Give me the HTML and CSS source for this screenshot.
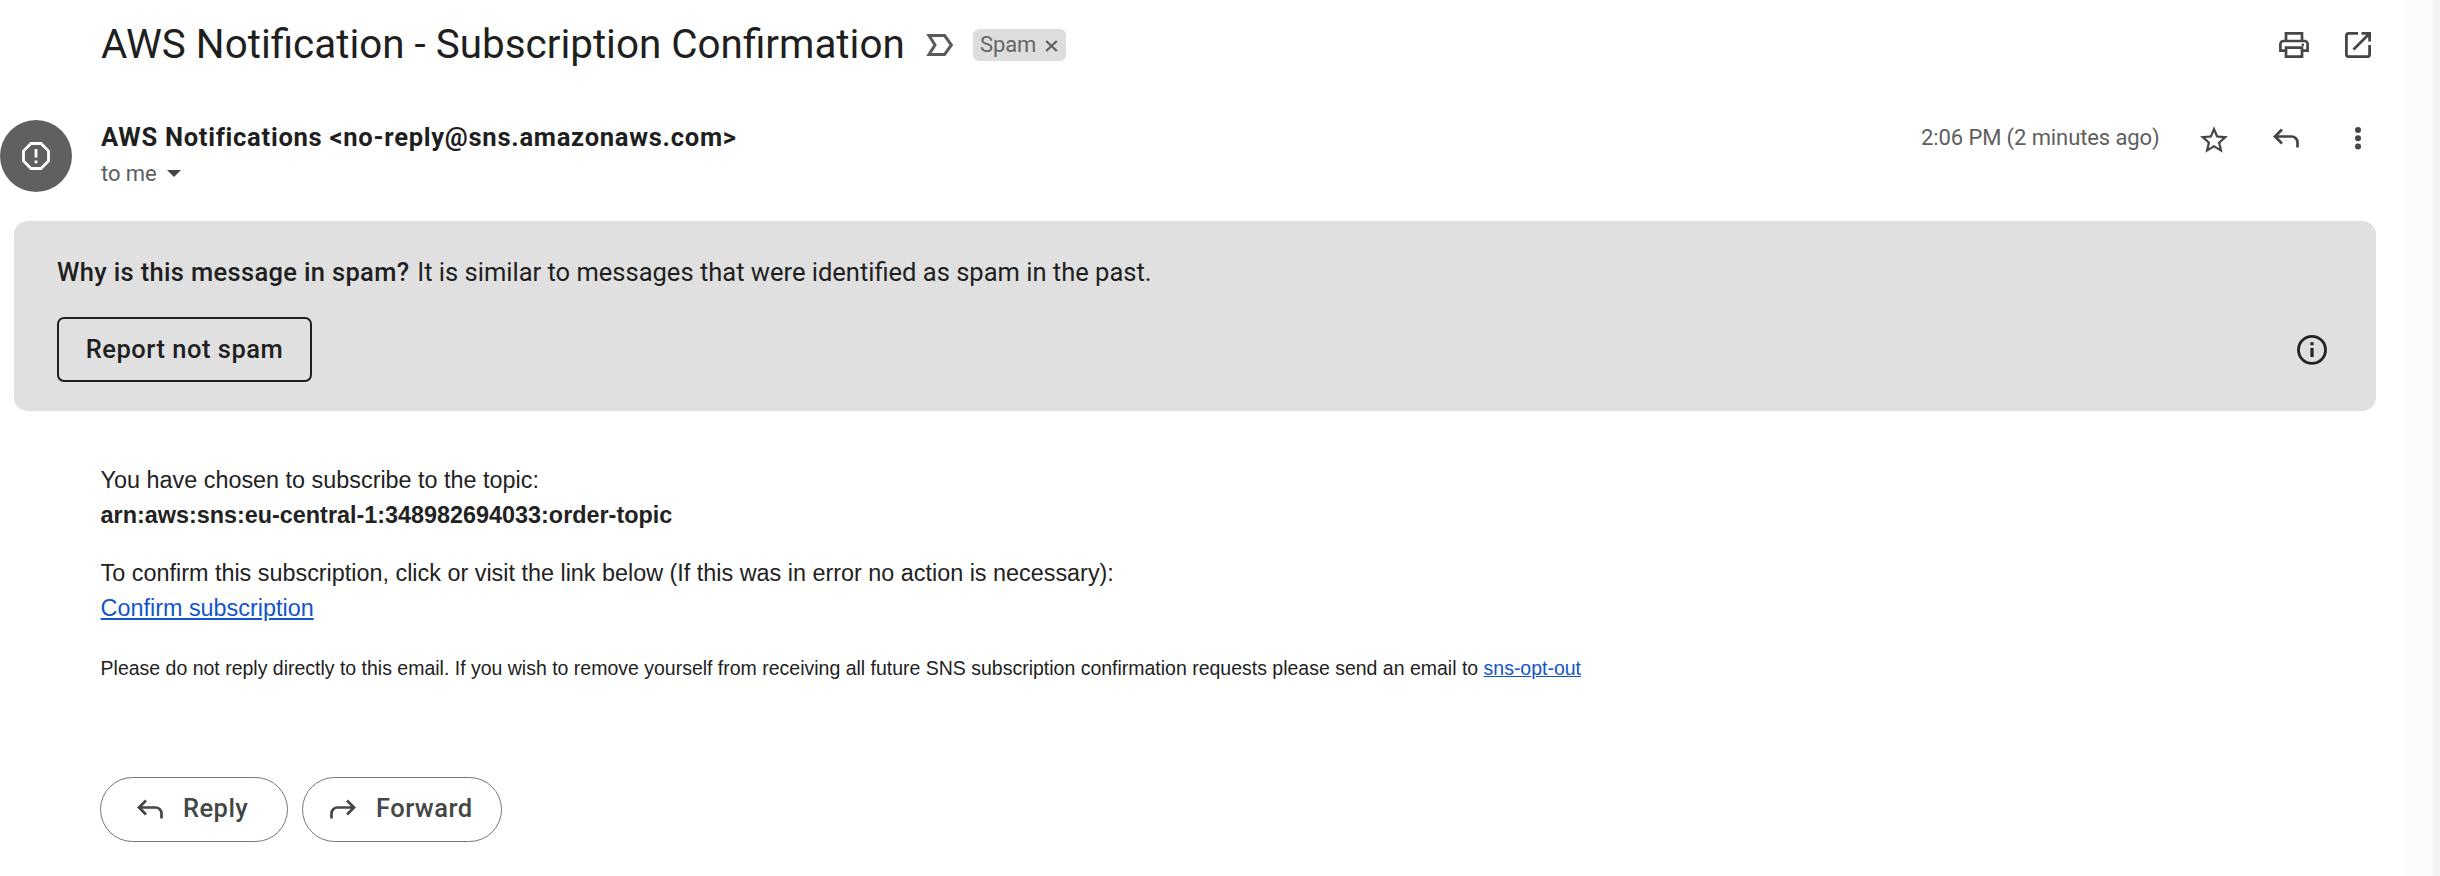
FILE: index.html
```html
<!DOCTYPE html>
<html lang="en">
<head>
<meta charset="utf-8">
<title>AWS Notification - Subscription Confirmation</title>
<link rel="stylesheet" href="styles.css">
</head>
<body>
<main class="message">
  <header class="subject-row">
    <h1 class="subject">AWS Notification - Subscription Confirmation</h1>
    <svg class="importance" width="28" height="24" viewBox="0 0 28 24"><path d="M3 2.6H18.6L25.4 12l-6.8 9.4H3L9 12z" fill="none" stroke="#5a5c5b" stroke-width="3"/></svg>
    <span class="chip"><span>Spam</span>
      <svg width="13" height="12" viewBox="0 0 13 12"><path d="M1.200 1l10.600 10M11.800 1L1.200 11" stroke="#5e5e5e" stroke-width="2.200"/></svg>
    </span>
    <span class="page-actions">
      <svg width="30" height="26" viewBox="0 0 30 26" fill="none" stroke="#444746" stroke-width="2.7"><path d="M7 8.5V1.35h16V8.5M7 18.6H1.4V12a3 3 0 0 1 3-3h21.2a3 3 0 0 1 3 3v6.6H23"/><path d="M7 15.6h16v9H7z"/><circle cx="23.8" cy="12.8" r="1.4" fill="#444746" stroke="none"/></svg>
      <svg width="26" height="26" viewBox="0 0 26 26" fill="none" stroke="#444746" stroke-width="2.8"><path d="M13 1.4H3.4a2 2 0 0 0-2 2v19.2a2 2 0 0 0 2 2h19.2a2 2 0 0 0 2-2V13M16.500 1.400H24.600V9.500M24 2L8.500 17.500"/></svg>
    </span>
  </header>

  <section class="sender-row">
    <span class="avatar"><svg width="28" height="28" viewBox="0 0 28 28"><path d="M9 1.500h10L26.500 9v10L19 26.500H9L1.500 19V9z" fill="none" stroke="#fff" stroke-width="2.800"/><path d="M14 7v8.600M14 18.400v2.900" stroke="#fff" stroke-width="2.800"/></svg></span>
    <div class="who">
      <div class="from">AWS Notifications &lt;no-reply@sns.amazonaws.com&gt;</div>
      <div class="to"><span>to me</span><svg width="14" height="7" viewBox="0 0 14 7"><path d="M0 0h14L7 7z" fill="#444746"/></svg></div>
    </div>
    <div class="meta">
      <span class="time">2:06 PM (2 minutes ago)</span>
      <svg class="star" width="28" height="27" viewBox="2 2 20 19"><path fill="#444746" d="M22 9.240l-7.190-.620L12 2 9.190 8.630 2 9.240l5.460 4.730L5.820 21 12 17.270 18.180 21l-1.630-7.030L22 9.240zM12 15.400l-3.760 2.270 1-4.280-3.320-2.880 4.380-.380L12 6.100l1.710 4.040 4.380.380-3.320 2.880 1 4.280L12 15.400z"/></svg>
      <svg class="back" width="26" height="20" viewBox="0 0 26 20"><path d="M9 1.500L2 8.500l7 7M2 8.500h16.500a6 6 0 0 1 6 6V19.500" fill="none" stroke="#444746" stroke-width="2.700"/></svg>
      <svg class="more" width="6" height="23" viewBox="0 0 6 23" fill="#444746"><circle cx="3" cy="3" r="3"/><circle cx="3" cy="11.300" r="3"/><circle cx="3" cy="19.600" r="3"/></svg>
    </div>
  </section>

  <section class="banner">
    <p class="reason"><b>Why is this message in spam?</b> It is similar to messages that were identified as spam in the past.</p>
    <div class="banner-actions">
      <button class="report">Report not spam</button>
      <svg width="30" height="30" viewBox="0 0 30 30"><circle cx="15" cy="14.900" r="13.500" fill="none" stroke="#242424" stroke-width="2.800"/><path d="M15 13v9M15 7.200v3" stroke="#242424" stroke-width="3.200"/></svg>
    </div>
  </section>

  <article class="body">
    <p>You have chosen to subscribe to the topic:<br><b>arn:aws:sns:eu-central-1:348982694033:order-topic</b></p>
    <p>To confirm this subscription, click or visit the link below (If this was in error no action is necessary):<br><a href="#">Confirm subscription</a></p>
    <p class="fine">Please do not reply directly to this email. If you wish to remove yourself from receiving all future SNS subscription confirmation requests please send an email to <a href="#">sns-opt-out</a></p>
  </article>

  <footer class="replies">
    <button class="pill reply"><svg width="26" height="20" viewBox="0 0 26 20"><path d="M9 1.500L2 8.500l7 7M2 8.500h16.500a6 6 0 0 1 6 6V19.500" fill="none" stroke="#444746" stroke-width="2.700"/></svg><span>Reply</span></button>
    <button class="pill forward"><svg width="26" height="20" viewBox="0 0 26 20"><path d="M17 1.500l7 7-7 7M24 8.500H7.500a6 6 0 0 0-6 6V19.500" fill="none" stroke="#444746" stroke-width="2.700"/></svg><span>Forward</span></button>
  </footer>
</main>
<div class="edge"></div><div class="gutter"></div>
</body>
</html>
```
FILE: styles.css
```css
* { box-sizing: border-box; }
body {
  margin: 0;
  height: 876px;
  display: flex;
  overflow: hidden;
  background: #fff;
  color: #1f1f1f;
  font-family: Roboto, "Liberation Sans", sans-serif;
}
h1, p { margin: 0; font-weight: 400; }
svg { display: block; flex: none; }
button { font: inherit; color: inherit; background: none; cursor: pointer; }
.message { width: 2405px; flex: none; }
.edge { width: 28px; background: #fcfcfc; }
.gutter { width: 7px; background: #f3f3f3; }

.subject-row { display: flex; align-items: center; height: 90px; padding: 0 34px 0 101px; }
.subject { font-size: 40.4px; line-height: 50px; white-space: nowrap; width: 825px; }
.chip {
  display: flex; align-items: center; gap: 9px;
  margin-left: 19px; width: 93px; height: 32px; padding-left: 7px;
  border-radius: 6px; background: #ddd; color: #666; font-size: 22px;
  letter-spacing: -.1px;
}
.chip span { padding-bottom: 1px; }
.chip svg { margin-top: 2px; }
.page-actions { display: flex; gap: 36px; margin-left: auto; }

.sender-row { display: flex; height: 131px; padding-top: 30px; }
.avatar {
  display: flex; align-items: center; justify-content: center;
  width: 72px; height: 72px; border-radius: 50%; background: #606060;
}
.who { margin-left: 29px; }
.from { font-size: 25.6px; font-weight: 700; line-height: 35px; letter-spacing: .71px; }
.to { display: flex; align-items: center; gap: 11px; font-size: 22px; line-height: 37px; letter-spacing: -.1px; color: #5e5e5e; }
.meta { display: flex; align-items: center; height: 36px; margin-left: auto; padding-right: 44px; color: #5e5e5e; font-size: 22px; letter-spacing: -.1px; }
.time { width: 279px; padding-bottom: 2px; }
.star { margin-top: 2px; }
.back { margin-left: 45px; }
.more { margin-left: 56px; }

.banner { margin: 0 29px 0 14px; height: 190px; padding: 33px 49px 0 43px; border-radius: 14px; background: #e0e0e0; }
.reason { font-size: 25.5px; line-height: 36px; white-space: nowrap; }
.reason b { margin-right: 1.5px; font-weight: 500; letter-spacing: .33px; }
.banner-actions { display: flex; align-items: center; justify-content: space-between; margin-top: 27px; }
.report { width: 255px; height: 65px; padding: 0 0 2px; border: 2px solid #1f1f1f; border-radius: 7px; font-size: 25.5px; font-weight: 500; letter-spacing: .5px; }

.body { padding: 52px 0 0 100.6px; color: #222; font: 23.39px/35.3px "Liberation Sans", Arial, sans-serif; white-space: nowrap; }
.body p + p { margin-top: 22.4px; }
.body a { color: #15c; }
.body .fine { margin-top: 27px; font-size: 19.49px; line-height: 29px; }

.replies { display: flex; gap: 14px; padding: 94px 0 0 100px; }
.pill {
  display: flex; align-items: center; gap: 20px; height: 65px;
  border: 1px solid #747775; border-radius: 33px; color: #444746;
  font-size: 25.5px; font-weight: 500; letter-spacing: .45px;
}
.pill span { padding-bottom: 2px; }
.reply { width: 188px; padding: 0 0 0 36px; }
.forward { width: 200px; padding: 0 0 0 27px; }
```
